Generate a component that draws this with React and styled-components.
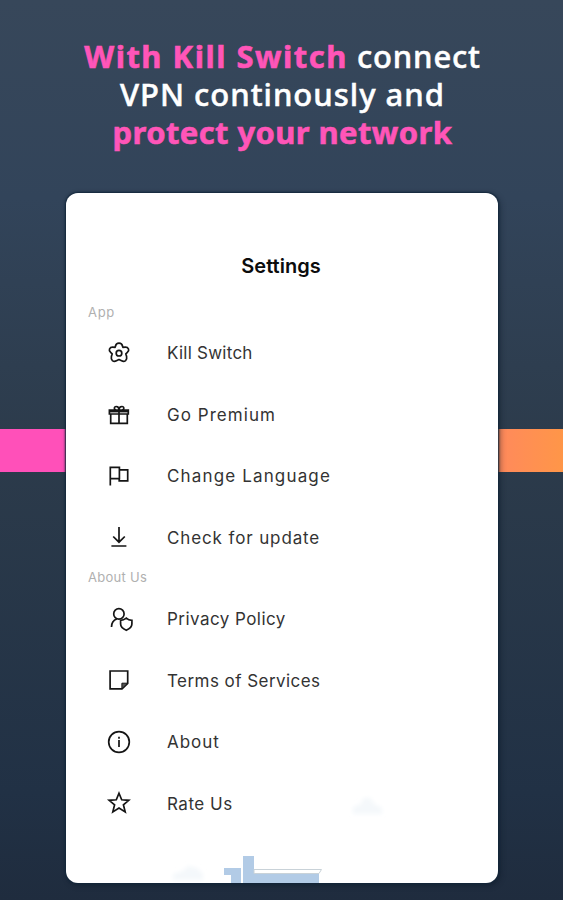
import React from "react";
import styled, { createGlobalStyle } from "styled-components";

const GlobalStyle = createGlobalStyle`
  * { box-sizing: border-box; }
  body { margin: 0; background: #202e3f; }
`;

const Page = styled.main`
  width: 563px;
  height: 900px;
  overflow: hidden;
  display: flex;
  flex-direction: column;
  align-items: center;
  background:
    linear-gradient(90deg, #ff50b9 0%, #ff50b9 12%, #ff8a5b 89%, #ff9648 100%) 0 429px / 100% 43px no-repeat,
    linear-gradient(180deg, #37475a 0%, #32445a 22%, #2c3b4b 50%, #213145 88%, #1f2c3e 100%);
`;

const Headline = styled.h1`
  width: 100%;
  height: 193px;
  flex: none;
  margin: 0;
  padding: 37px 0 0 2px;
  display: flex;
  flex-direction: column;
  align-items: center;
  font: 500 31px/38px "Noto Sans", "Open Sans", sans-serif;
  color: #fff;
`;

const Line = styled.span`
  display: flex;
  gap: 9px;
  white-space: pre;
`;

const Phrase = styled.span`
  color: ${(p) => (p.$accent ? "#ff55b8" : "#fff")};
  font-weight: ${(p) => (p.$accent ? 700 : 500)};
  letter-spacing: ${(p) => p.$track}px;
  -webkit-text-stroke: ${(p) => (p.$accent ? 0.6 : 0.5)}px currentColor;
`;

const Card = styled.section`
  position: relative;
  width: 432px;
  height: 690px;
  flex: none;
  overflow: hidden;
  border-radius: 12px;
  background: #fff;
  font-family: Inter, "Open Sans", sans-serif;
`;

const CardShadow = styled.div`
  border-radius: 12px;
  margin-left: 1px;
  box-shadow: 0 0 2px 1px #12263a, 2px 2px 6px rgba(8, 20, 34, 0.45);
`;

const Title = styled.h2`
  height: 109px;
  margin: 0;
  padding: 61px 2px 0 0;
  text-align: center;
  font-size: 20px;
  line-height: 24px;
  font-weight: 600;
  letter-spacing: 0;
  color: #0c0c0c;
`;

const GroupLabel = styled.h3`
  height: 20px;
  margin: 0;
  padding-left: 22px;
  font-size: 13px;
  line-height: ${(p) => p.$leading}px;
  font-weight: 400;
  letter-spacing: ${(p) => p.$track}px;
  color: #b0b0b0;
`;

const Rows = styled.ul`
  list-style: none;
  margin: 0;
  padding: 0;
`;

const Row = styled.li`
  display: flex;
  align-items: center;
  height: 61.5px;
  padding-left: 40.7px;
  gap: 36.3px;
`;

const RowText = styled.span`
  padding-top: 1px;
  font-size: 17px;
  line-height: 24px;
  letter-spacing: ${(p) => p.$track}px;
  color: #333;
`;

const Icon = styled.svg`
  width: 24px;
  height: 24px;
  flex: none;
  fill: none;
  stroke: #151515;
  stroke-width: 1.7;
`;

const Scenery = styled.svg`
  position: absolute;
  left: 94px;
  bottom: 0;
  width: 240px;
  height: 94px;
`;

const icons = {
  flower: (
    <>
      <path strokeLinejoin="round" d="M8.6 4.9Q9 2.1 12 2.1Q15 2.1 15.4 4.9L15.9 6.3L18.2 6.1Q20.6 6 21.5 8Q22.2 10 20.4 11.3L18.8 12.8L19.6 15.6Q20.2 18.2 18.6 19.6Q16.8 21 14.6 19.8L12 18.5L9.4 19.8Q7.2 21 5.4 19.6Q3.8 18.2 4.4 15.6L5.2 12.8L3.6 11.3Q1.8 10 2.5 8Q3.4 6 5.8 6.1L8.1 6.3Z" />
      <circle cx="12" cy="12.2" r="2.8" />
    </>
  ),
  gift: (
    <>
      <path d="M2.4 8.1H21.3V12H2.4ZM3.7 12V21.4H20.3V12M12 8V21M12 8H9.5C6.7 8 6.8 4.5 9.2 4.5C11.1 4.5 12 6.1 12 8ZM12 8H14.7C17.5 8 17.4 4.5 15 4.5C13.1 4.5 12 6.1 12 8Z" />
      <path strokeWidth="2" d="M3 9.4H21" />
    </>
  ),
  flag: <path d="M3.3 21.5V3.4H12.4V14.7H3.3M12.4 5.8H20.7V16.8H12.2V14.7" />,
  download: <path d="M12 2V16.6M6.2 11.5L12 17.2L17.8 11.5M4.4 21H19.4" />,
  privacy: (
    <>
      <circle cx="11.9" cy="6.9" r="5.2" />
      <path d="M4.5 19.9C4.5 15.4 6.5 13.2 9.8 12M13.6 13.3C15.9 13.3 17.5 12.5 19.3 11.1C20.8 12.5 22.6 13.2 24.9 13.3V17.1C24.9 20 22.6 21.9 19.3 23.3C15.9 21.9 13.6 20 13.6 17.1Z" />
    </>
  ),
  note: (
    <>
      <path d="M3.1 3H20.7V15.5L15 20.8H3.1Z" />
      <path d="M20.6 15.2H14.9V20.8Z" fill="#555" strokeWidth="1" />
    </>
  ),
  info: (
    <>
      <circle cx="12" cy="12" r="10.3" />
      <path d="M12 10.1V17M12 6.8V8.7" />
    </>
  ),
  star: <path d="M12 2.2L14.7 8.8L21.8 9.3L16.4 13.8L18.2 20.9L12 17.1L5.8 20.9L7.6 13.8L2.1 9.3L9.3 8.8Z" />,
};

const groups = [
  {
    label: "App",
    track: 0.7,
    leading: 20,
    rows: [
      ["flower", "Kill Switch", 0.25],
      ["gift", "Go Premium", 1.05],
      ["flag", "Change Language", 1.15],
      ["download", "Check for update", 0.88],
    ],
  },
  {
    label: "About Us",
    track: 0.3,
    leading: 18,
    rows: [
      ["privacy", "Privacy Policy", 0.45],
      ["note", "Terms of Services", 0.45],
      ["info", "About", 0.95],
      ["star", "Rate Us", 0.5],
    ],
  },
];

function CardScenery() {
  return (
    <Scenery viewBox="0 0 240 94" aria-hidden="true">
      <defs>
        <filter id="haze" x="-30%" y="-40%" width="160%" height="180%">
          <feGaussianBlur stdDeviation="2" />
        </filter>
      </defs>
      <g filter="url(#haze)" fill="#f4f8fb">
        <path d="M193 25V18L201 15L203 9H211L214 15L222 19V25Z" />
        <path d="M13 91V85L23 82L28 77L37 79L43 85V91Z" />
      </g>
      <path fill="#b2cbe6" d="M64 79H81V94H71V86H64ZM83 67H94V82L159 84V94H83Z" />
      <path fill="#fff" stroke="#c9d2d8" d="M94 80.5H161.5L159 84.5H94Z" />
    </Scenery>
  );
}

export default function App() {
  return (
    <Page>
      <GlobalStyle />
      <Headline>
        <Line>
          <Phrase $accent $track={1.5}>With Kill Switch</Phrase>
          <Phrase $track={0.85}>connect</Phrase>
        </Line>
        <Line>
          <Phrase $track={1}>VPN continously and</Phrase>
        </Line>
        <Line>
          <Phrase $accent $track={0.4}>protect your network</Phrase>
        </Line>
      </Headline>
      <CardShadow>
        <Card>
          <Title>Settings</Title>
          {groups.map((group) => (
            <React.Fragment key={group.label}>
              <GroupLabel $track={group.track} $leading={group.leading}>
                {group.label}
              </GroupLabel>
              <Rows>
                {group.rows.map(([icon, text, track]) => (
                  <Row key={text}>
                    <Icon viewBox="0 0 24 24" overflow="visible">{icons[icon]}</Icon>
                    <RowText $track={track}>{text}</RowText>
                  </Row>
                ))}
              </Rows>
            </React.Fragment>
          ))}
          <CardScenery />
        </Card>
      </CardShadow>
    </Page>
  );
}
